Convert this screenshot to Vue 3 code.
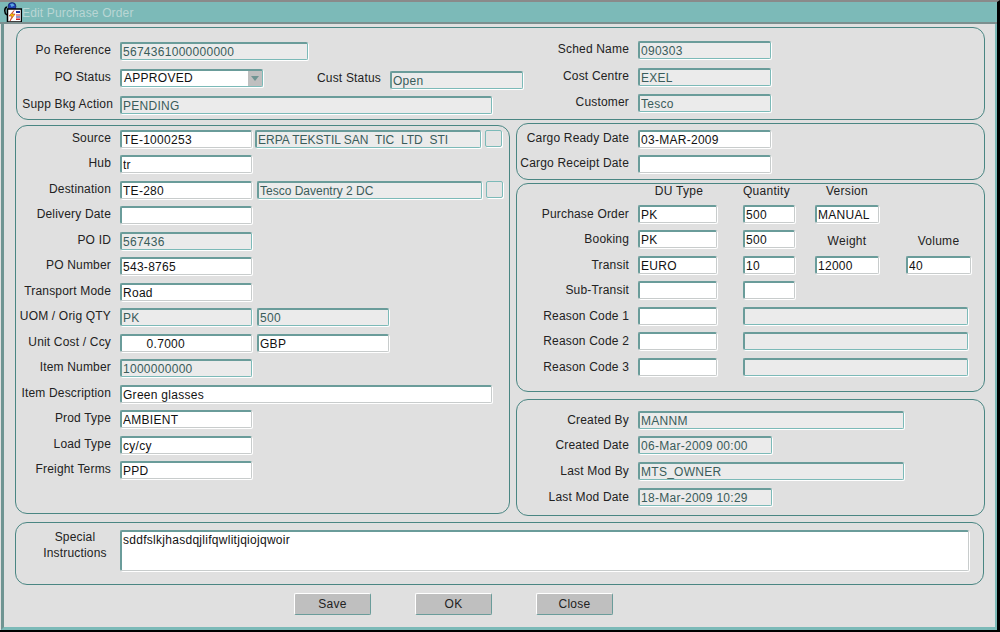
<script setup>
// Edit Purchase Order form
const leftRows = [
  { label: "Source", gap: 3, fields: [{ v: "TE-1000253", w: 132 }, { v: "ERPA TEKSTIL SAN  TIC  LTD  STI", w: 226, ro: true, tight: true }], lov: true },
  { label: "Hub", fields: [{ v: "tr", w: 132 }] },
  { label: "Destination", gap: 5, fields: [{ v: "TE-280", w: 132 }, { v: "Tesco Daventry 2 DC", w: 225, ro: true, tight: true }], lov: true },
  { label: "Delivery Date", fields: [{ v: "", w: 132 }] },
  { label: "PO ID", fields: [{ v: "567436", w: 132, ro: true }] },
  { label: "PO Number", fields: [{ v: "543-8765", w: 132 }] },
  { label: "Transport Mode", fields: [{ v: "Road", w: 132 }] },
  { label: "UOM / Orig QTY", gap: 5, fields: [{ v: "PK", w: 132, ro: true }, { v: "500", w: 132, ro: true }] },
  { label: "Unit Cost / Ccy", gap: 5, fields: [{ v: "0.7000", w: 132, num: true }, { v: "GBP", w: 132 }] },
  { label: "Item Number", fields: [{ v: "1000000000", w: 132, ro: true }] },
  { label: "Item Description", fields: [{ v: "Green glasses", w: 372 }] },
  { label: "Prod Type", fields: [{ v: "AMBIENT", w: 132 }] },
  { label: "Load Type", fields: [{ v: "cy/cy", w: 132 }] },
  { label: "Freight Terms", fields: [{ v: "PPD", w: 132 }] },
];
const auditRows = [
  { label: "Created By", v: "MANNM", w: 266 },
  { label: "Created Date", v: "06-Mar-2009 00:00", w: 134 },
  { label: "Last Mod By", v: "MTS_OWNER", w: 266 },
  { label: "Last Mod Date", v: "18-Mar-2009 10:29", w: 134 },
];
const reasons = ["Reason Code 1", "Reason Code 2", "Reason Code 3"];
</script>

<template>
  <div class="window">
    <div class="titlebar">
      <svg class="appicon" width="20" height="20" viewBox="0 0 20 20">
        <path d="M5 5C2 6 2 11 5 13" fill="none" stroke="#000" stroke-width="1.5" />
        <circle cx="10" cy="4.5" r="4" fill="#1f3fb0" stroke="#101a50" stroke-width="0.6" />
        <path d="M8 2l3-.5 1.5 2-3 1.5z" fill="#5aa8e0" />
        <rect x="5.5" y="7" width="14" height="13" fill="#fff" stroke="#000" stroke-width="1.5" />
        <path d="M12 8.500L7 14h3l-2 5 5-7h-3z" fill="#f0d000" stroke="#c02020" stroke-width="0.6" />
        <rect x="14" y="9" width="4" height="2" fill="#1c2f9c" />
        <rect x="14" y="12.500" width="4" height="1" fill="#d02020" />
        <rect x="14" y="14.500" width="4" height="1" fill="#1c2f9c" />
        <rect x="14" y="16.500" width="4" height="1.500" fill="#d02020" />
      </svg>
      <span class="title">Edit Purchase Order</span>
    </div>

    <div class="body">
      <section class="panel top">
        <div class="top-col">
          <div class="row">
            <label class="lbl">Po Reference</label>
            <input class="fld ro w188" value="5674361000000000" readonly />
          </div>
          <div class="row">
            <label class="lbl">PO Status</label>
            <div class="select">
              <span>APPROVED</span>
              <i class="arrow"></i>
            </div>
            <label class="lbl cust">Cust Status</label>
            <input class="fld ro low w133" value="Open" readonly />
          </div>
          <div class="row">
            <label class="lbl supp">Supp Bkg Action</label>
            <input class="fld ro w372" value="PENDING" readonly />
          </div>
        </div>
        <div class="top-col right">
          <div class="row">
            <label class="lbl">Sched Name</label>
            <input class="fld ro w133" value="090303" readonly />
          </div>
          <div class="row">
            <label class="lbl">Cost Centre</label>
            <input class="fld ro w133" value="EXEL" readonly />
          </div>
          <div class="row">
            <label class="lbl">Customer</label>
            <input class="fld ro w133" value="Tesco" readonly />
          </div>
        </div>
      </section>

      <div class="middle">
        <section class="panel left">
          <div v-for="r in leftRows" :key="r.label" class="row lrow">
            <label class="lbl">{{ r.label }}</label>
            <template v-for="(f, i) in r.fields" :key="i">
              <span v-if="i > 0" :style="{ width: r.gap + 'px' }"></span>
              <input
                class="fld"
                :class="{ ro: f.ro, num: f.num, tight: f.tight }"
                :style="{ width: f.w + 'px' }"
                :value="f.v"
                readonly
              />
            </template>
            <button v-if="r.lov" class="lov"></button>
          </div>
        </section>

        <div class="rightcol">
          <section class="panel cargo">
            <div class="row crow">
              <label class="lbl">Cargo Ready Date</label>
              <input class="fld w133" value="03-MAR-2009" readonly />
            </div>
            <div class="row crow">
              <label class="lbl">Cargo Receipt Date</label>
              <input class="fld w133" value="" readonly />
            </div>
          </section>

          <section class="panel units">
            <div class="grid">
              <span></span>
              <span class="head up u79 du">DU Type</span>
              <span class="head up u52 qty">Quantity</span>
              <span class="head up u64">Version</span>
              <span></span>

              <label class="lbl">Purchase Order</label>
              <input class="fld u79" value="PK" readonly />
              <input class="fld u52" value="500" readonly />
              <input class="fld u64" value="MANUAL" readonly />
              <span></span>

              <label class="lbl">Booking</label>
              <input class="fld u79" value="PK" readonly />
              <input class="fld u52" value="500" readonly />
              <span class="head u64">Weight</span>
              <span class="head u65">Volume</span>

              <label class="lbl">Transit</label>
              <input class="fld u79" value="EURO" readonly />
              <input class="fld u52" value="10" readonly />
              <input class="fld u64" value="12000" readonly />
              <input class="fld u65" value="40" readonly />

              <label class="lbl">Sub-Transit</label>
              <input class="fld u79" value="" readonly />
              <input class="fld u52" value="" readonly />
              <span></span>
              <span></span>

              <template v-for="c in reasons" :key="c">
                <label class="lbl">{{ c }}</label>
                <input class="fld u79" value="" readonly />
                <input class="fld ro span3" value="" readonly />
              </template>
            </div>
          </section>

          <section class="panel audit">
            <div v-for="a in auditRows" :key="a.label" class="row arow">
              <label class="lbl">{{ a.label }}</label>
              <input class="fld ro" :style="{ width: a.w + 'px' }" :value="a.v" readonly />
            </div>
          </section>
        </div>
      </div>

      <section class="panel special">
        <label class="lbl sp">Special<br />Instructions</label>
        <div class="fld area">sddfslkjhasdqjlifqwlitjqiojqwoir</div>
      </section>

      <div class="buttons">
        <button class="btn">Save</button>
        <button class="btn">OK</button>
        <button class="btn">Close</button>
      </div>
    </div>
  </div>
</template>

<style scoped>
.window {
  width: 1000px;
  height: 632px;
  box-sizing: border-box;
  background: #e0e0e0;
  border-top: 2px solid #8a8a8a;
  border-right: 3px solid #000;
  border-bottom: 2px solid #000;
  font-family: "Liberation Sans", Arial, sans-serif;
  font-size: 12px;
  color: #222;
  display: flex;
  flex-direction: column;
}
.titlebar {
  height: 20px;
  flex: none;
  background: #7cbab8;
  border-bottom: 2px solid #7c8f8f;
  display: flex;
  align-items: center;
  color: #b9d6d4;
  font-size: 12px;
  letter-spacing: 0.15px;
}
.title {
  padding-top: 2px;
}
.appicon {
  margin: 0 0 0 2px;
  flex: none;
}
.body {
  flex: 1;
  box-sizing: border-box;
  padding: 3px 12px 0 15px;
  border-left: 3px solid #6f9492;
  border-right: 2px solid #7cbab8;
  border-bottom: 3px solid #7cbab8;
  margin-left: 1px;
}
.panel {
  box-sizing: border-box;
  border: 1px solid #4a8683;
  border-radius: 12px;
}
.top {
  height: 93px;
  margin-left: -3px;
  width: 969px;
  padding: 9px 0 0 4px;
  display: flex;
}
.top-col {
  width: 518px;
}
.top-col .row {
  height: 27px;
}
.top-col.right {
  width: auto;
}
.top-col.right .row {
  height: 26.5px;
}
.top .lbl {
  width: 99px;
}
.top .lbl.cust {
  width: 127px;
  top: 0;
}
.top .lbl.supp {
  padding-right: 7px;
}
.row {
  display: flex;
  align-items: center;
  height: 26.5px;
}
.lbl {
  flex: none;
  text-align: right;
  letter-spacing: 0.18px;
  padding-right: 9px;
  box-sizing: border-box;
  position: relative;
  top: -1px;
  white-space: nowrap;
}
.fld {
  box-sizing: border-box;
  height: 18px;
  padding: 1px 0 0 1px;
  margin: 0;
  background: #fff;
  border-style: solid;
  border-width: 2px 1px 1px 2px;
  border-color: #6a9c9a #c8cccc #c8cccc #6a9c9a;
  border-radius: 2px;
  box-shadow: 1px 1px 0 #fff;
  font: inherit;
  letter-spacing: 0.28px;
  color: #111;
  outline: none;
  flex: none;
}
.fld.ro {
  background: #ebebeb;
  color: #3a5c5a;
  border-color: #6a9c9a #7cbab8 #7cbab8 #6a9c9a;
}
.fld.tight {
  letter-spacing: 0;
}
.fld.low {
  position: relative;
  top: 2px;
}
.fld.num {
  text-align: right;
  padding-right: 66px;
}
.w133 { width: 133px; }
.w188 { width: 188px; }
.w372 { width: 372px; }
.select {
  box-sizing: border-box;
  width: 143px;
  height: 18px;
  background: #fff;
  border-style: solid;
  border-width: 2px 1px 1px 2px;
  border-color: #6a9c9a #7cbab8 #7cbab8 #6a9c9a;
  border-radius: 2px;
  box-shadow: 1px 1px 0 #fff;
  display: flex;
  align-items: center;
  padding-left: 2px;
  letter-spacing: 0.28px;
  color: #111;
  flex: none;
}
.select span {
  flex: 1;
}
.arrow {
  width: 14px;
  height: 15px;
  background: #bfbfbf;
  position: relative;
}
.arrow::after {
  content: "";
  position: absolute;
  left: 3px;
  top: 5px;
  border-left: 4px solid transparent;
  border-right: 4px solid transparent;
  border-top: 5px solid #6f9492;
}
.middle {
  display: flex;
  gap: 6px;
  margin-top: 5px;
  margin-left: -4px;
}
.left {
  width: 495px;
  height: 389px;
  flex: none;
}
.left .lbl {
  width: 104px;
}
.lrow {
  height: 25.5px;
}
.lov {
  box-sizing: border-box;
  width: 17px;
  height: 17px;
  margin-left: 4px;
  background: #e4e4e4;
  border: 1px solid #7cbab8;
  border-radius: 2px;
  box-shadow: 1px 1px 0 #fff;
  padding: 0;
}
.rightcol {
  width: 469px;
  flex: none;
  margin-top: -2px;
}
.rightcol .row .lbl {
  width: 121px;
}
.cargo {
  height: 57px;
  padding-top: 2px;
}
.crow {
  height: 25px;
}
.units {
  height: 209px;
  margin-top: 3px;
}
.units .lbl,
.audit .lbl {
  top: 0;
}
.grid {
  display: grid;
  grid-template-columns: 121px 105px 72px 91px 65px;
  grid-template-rows: 17px repeat(7, 25.5px);
  align-items: center;
}
.u79 { width: 79px; }
.u52 { width: 52px; }
.u64 { width: 64px; }
.u65 { width: 65px; }
.head {
  text-align: center;
  letter-spacing: 0.28px;
  white-space: nowrap;
  position: relative;
  top: 2px;
}
.head.up {
  top: -2px;
}
.head.du {
  padding-left: 3px;
  box-sizing: border-box;
}
.head.qty {
  text-align: left;
}
.units .span3 {
  grid-column: span 3;
  width: 225px;
}
.audit {
  height: 117px;
  margin-top: 7px;
  padding-top: 7px;
}
.arow {
  height: 25.6px;
}
.special {
  height: 63px;
  width: 969px;
  margin-top: 6px;
  margin-left: -4px;
  display: flex;
  padding-top: 7px;
}
.sp {
  width: 104px;
  text-align: center;
  padding: 0 0 0 14px;
  line-height: 16px;
}
.area {
  width: 849px;
  height: 41px;
  letter-spacing: 0.28px;
}
.buttons {
  display: flex;
  gap: 44px;
  margin: 8px 0 0 275px;
}
.btn {
  box-sizing: border-box;
  width: 77px;
  height: 22px;
  background: #bfbfbf;
  border-style: solid;
  border-width: 1px;
  border-color: #fff #6a9c9a #6a9c9a #fff;
  border-radius: 2px;
  font: inherit;
  letter-spacing: 0.28px;
  color: #222;
  padding: 0;
}
</style>

<style>
html,
body {
  margin: 0;
  background: #e0e0e0;
}
</style>
